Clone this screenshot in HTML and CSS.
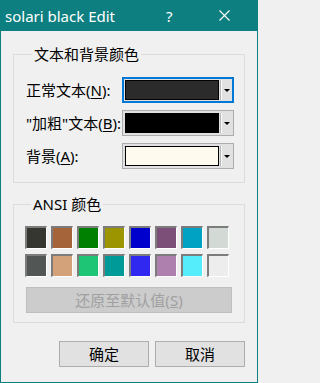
FILE: index.html
```html
<!DOCTYPE html>
<html lang="zh-CN">
<head>
<meta charset="utf-8">
<title>solari black Edit</title>
<link rel="stylesheet" href="styles.css">
</head>
<body>
<div class="window">
  <div class="titlebar">
    <span class="title">solari black Edit</span>
    <span class="help">?</span>
    <span class="close">
      <svg width="11" height="11" viewBox="0 0 11 11"><path d="M0.5 0.5 L10.5 10.5 M10.5 0.5 L0.5 10.5" stroke="#fff" stroke-width="1.1" fill="none"/></svg>
    </span>
  </div>
  <div class="content">
    <fieldset class="group group-text">
      <legend>文本和背景颜色</legend>
      <div class="row">
        <span class="label">正常文本(<u>N</u>):</span>
        <div class="combo focused">
          <span class="swatch" style="background:#2b2b2b"></span>
          <span class="sep"></span>
          <span class="arrow"></span>
        </div>
      </div>
      <div class="row">
        <span class="label">"加粗"文本(<u>B</u>):</span>
        <div class="combo">
          <span class="swatch" style="background:#000000"></span>
          <span class="sep"></span>
          <span class="arrow"></span>
        </div>
      </div>
      <div class="row">
        <span class="label">背景(<u>A</u>):</span>
        <div class="combo">
          <span class="swatch" style="background:#fffaf0"></span>
          <span class="sep"></span>
          <span class="arrow"></span>
        </div>
      </div>
    </fieldset>
    <fieldset class="group group-ansi">
      <legend>ANSI 颜色</legend>
      <div class="grid">
        <span class="cell" style="background:#363630"></span>
        <span class="cell" style="background:#a5643a"></span>
        <span class="cell" style="background:#008000"></span>
        <span class="cell" style="background:#9c9500"></span>
        <span class="cell" style="background:#0000cd"></span>
        <span class="cell" style="background:#7b4f77"></span>
        <span class="cell" style="background:#00a2c4"></span>
        <span class="cell" style="background:#d3d9d4"></span>
        <span class="cell" style="background:#525654"></span>
        <span class="cell" style="background:#d3a27b"></span>
        <span class="cell" style="background:#1dc574"></span>
        <span class="cell" style="background:#009b98"></span>
        <span class="cell" style="background:#3027f0"></span>
        <span class="cell" style="background:#ad80ad"></span>
        <span class="cell" style="background:#55edfb"></span>
        <span class="cell" style="background:#ecedec"></span>
      </div>
      <button class="restore" disabled>还原至默认值(<u>S</u>)</button>
    </fieldset>
    <div class="buttons">
      <button class="btn">确定</button>
      <button class="btn">取消</button>
    </div>
  </div>
</div>
</body>
</html>
```
FILE: styles.css
```css
html, body {
  margin: 0;
  padding: 0;
  background: #f0f0f0;
}
body {
  font-family: "Noto Sans", "Noto Sans CJK SC", sans-serif;
  font-size: 15px;
  color: #000;
}
.window {
  width: 258px;
  height: 383px;
  box-sizing: border-box;
  border: 1px solid #0e7f80;
  border-top: none;
  background: #f0f0f0;
  display: flex;
  flex-direction: column;
  overflow: hidden;
}
.titlebar {
  height: 31px;
  background: #0e7f80;
  margin: 0 -1px;
  display: flex;
  align-items: center;
  color: #fff;
  flex-shrink: 0;
}
.title {
  padding-left: 5px;
  font-size: 15px;
  line-height: 20px;
  width: 158px;
  white-space: nowrap;
}
.help {
  width: 16px;
  font-size: 15px;
  line-height: 20px;
  margin-left: 3px;
}
.close {
  margin-left: 37px;
  display: flex;
  width: 11px;
  height: 11px;
}
.content {
  padding: 13px 0 0 12px;
  display: flex;
  flex-direction: column;
}
.group {
  margin: 0;
  padding: 0;
  width: 232px;
  box-sizing: border-box;
  border: 1px solid #dcdcdc;
  min-width: 0;
}
.group legend {
  margin-left: 6px;
  padding: 0 2px;
  line-height: 20px;
  font-size: 15px;
}
.group-text {
  padding: 13px 10px 13px 12px;
}
.row {
  display: flex;
  align-items: center;
  height: 26px;
  margin-bottom: 7px;
}
.row:last-child {
  margin-bottom: 0;
}
.label {
  width: 96px;
  white-space: nowrap;
  line-height: 20px;
}
.label u {
  text-underline-offset: 2px;
}
.combo {
  width: 112px;
  height: 26px;
  box-sizing: border-box;
  border: 1px solid #adadad;
  background: #e1e1e1;
  padding: 2px;
  display: flex;
  align-items: stretch;
}
.combo.focused {
  border: 2px solid #0078d7;
  padding: 1px;
}
.swatch {
  width: 94px;
  box-sizing: border-box;
  border: 1px solid #000;
}
.sep {
  width: 1px;
  margin-left: 1px;
  background: #b8b8b8;
  border-right: 1px solid #fafafa;
}
.arrow {
  flex: 1;
  display: flex;
  align-items: center;
  justify-content: center;
}
.arrow::after {
  content: "";
  width: 0;
  height: 0;
  border-left: 3px solid transparent;
  border-right: 3px solid transparent;
  border-top: 3px solid #000;
  margin-top: 1px;
}
.group-ansi {
  margin-top: 11px;
  padding: 12px 11px 9px 11px;
}
.grid {
  display: grid;
  grid-template-columns: repeat(8, 22px);
  grid-auto-rows: 23px;
  column-gap: 4px;
  row-gap: 5px;
}
.cell {
  box-sizing: border-box;
  border-top: 2px solid #7c7c7c;
  border-left: 2px solid #7c7c7c;
  border-right: 1px solid #ffffff;
  border-bottom: 1px solid #ffffff;
}
.restore {
  margin: 10px 0 0 1px;
  width: 206px;
  height: 26px;
  box-sizing: border-box;
  border: 1px solid #bfbfbf;
  background: #cccccc;
  color: #a0a0a0;
  font-family: inherit;
  font-size: 15px;
  line-height: 20px;
  padding: 0;
}
.buttons {
  display: flex;
  justify-content: flex-end;
  gap: 6px;
  margin-top: 18px;
  width: 232px;
}
.btn {
  width: 90px;
  height: 26px;
  box-sizing: border-box;
  border: 1px solid #adadad;
  background: #e1e1e1;
  font-family: inherit;
  font-size: 15px;
  line-height: 20px;
  color: #000;
  padding: 0;
}
```
